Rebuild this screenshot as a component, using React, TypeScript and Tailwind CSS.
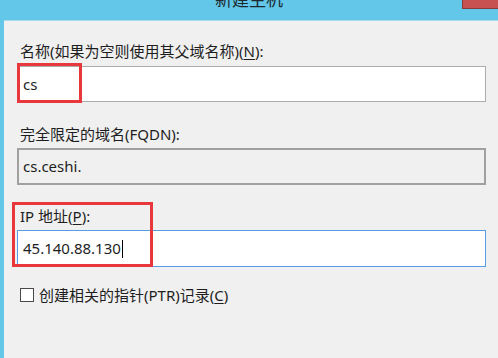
import React from "react";

const font = { fontFamily: '"Noto Sans", "Noto Sans CJK SC", sans-serif' };

export default function App() {
  return (
    <div
      className="w-[498px] h-[358px] bg-[#62c7e9] flex flex-col overflow-hidden text-[#1e1e1e]"
      style={font}
    >
      {/* title bar */}
      <div className="relative h-[20px] flex justify-center overflow-hidden">
        <span className="text-[17px] leading-[20px] -mt-[10px] text-[#1c2a30]">新建主机</span>
        <div className="absolute right-0 top-0 w-[36px] h-[9px] bg-[#c75050] border-l border-b border-[#8a3a3a]" />
      </div>
      {/* body */}
      <div className="relative flex-1 ml-[4px] bg-[#f0f0f0] border-t border-[#a9d9ea] pl-[13px] pr-[12px] pt-[20px] flex flex-col text-[15px]">
        <div className="pl-[3px] leading-[20px]">
          名称(如果为空则使用其父域名称)(<span className="underline underline-offset-2">N</span>):
        </div>
        <div className="relative mt-[5px] h-[36px] bg-white border border-[#acacac] flex items-center pl-[5px]">
          cs
          <div className="absolute -left-[1px] -top-[4px] w-[65px] h-[40px] border-[3px] border-[#e8383d]" />
        </div>

        <div className="pl-[3px] leading-[20px] mt-[22px]">完全限定的域名(FQDN):</div>
        <div className="mt-[4px] h-[37px] bg-[#f0f0f0] border-2 border-[#a0a0a0] flex items-center pl-[4px]">
          cs.ceshi.
        </div>

        <div className="relative mt-[17px]">
          <div className="absolute -left-[5px] top-0 w-[141px] h-[65px] border-[3px] border-[#e8383d] z-10 pointer-events-none" />
          <div className="pl-[3px] leading-[20px] pt-[4px]">
            IP 地址(<span className="underline underline-offset-2">P</span>):
          </div>
          <div className="mt-[4px] h-[37px] bg-white border border-[#569de5] flex items-center pl-[5px]">
            45.140.88.130
            <span className="inline-block w-[1px] h-[18px] bg-black ml-[1px]" />
          </div>
        </div>

        <div className="mt-[18px] flex items-center pl-[3px] leading-[20px]">
          <span className="w-[14px] h-[14px] border border-[#4a4a4a] bg-white mr-[5px]" />
          创建相关的指针(PTR)记录(<span className="underline underline-offset-2">C</span>)
        </div>
      </div>
    </div>
  );
}
